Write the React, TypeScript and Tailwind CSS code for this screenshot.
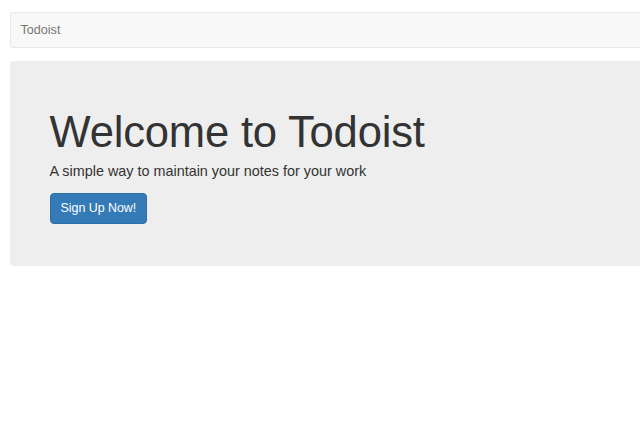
import React from 'react';

const App: React.FC = () => {
  return (
    <div className="w-screen min-h-screen overflow-hidden bg-white font-['Liberation_Sans',Arial,sans-serif] text-[#333]">
      <div className="w-[914px] px-[9.5px] pt-[12px]">
        {/* Navbar */}
        <nav className="h-[36px] flex items-center bg-[#f8f8f8] border border-[#e7e7e7] rounded-[3px] px-[10px]">
          <a href="#" className="text-[12.6px] text-[#777] leading-none">Todoist</a>
        </nav>

        {/* Jumbotron */}
        <div className="mt-[13px] bg-[#eeeeee] rounded-[4px] pl-[40px] pr-[42px] pt-[34px] pb-[32px]">
          <h1 className="mt-[14px] mb-[4px] text-[43.6px] leading-[1.1] tracking-[-0.2px]">Welcome to Todoist</h1>
          <p className="mb-[12px] text-[14.4px] leading-[1.4]">A simple way to maintain your notes for your work</p>
          <p className="mb-[10px]">
            <a
              href="#"
              className="inline-block bg-[#337ab7] border border-[#2e6da4] text-white rounded-[4px] px-[10px] py-[6px] text-[12.4px] leading-[1.33]"
            >
              Sign Up Now!
            </a>
          </p>
        </div>
      </div>
    </div>
  );
};

export default App;
